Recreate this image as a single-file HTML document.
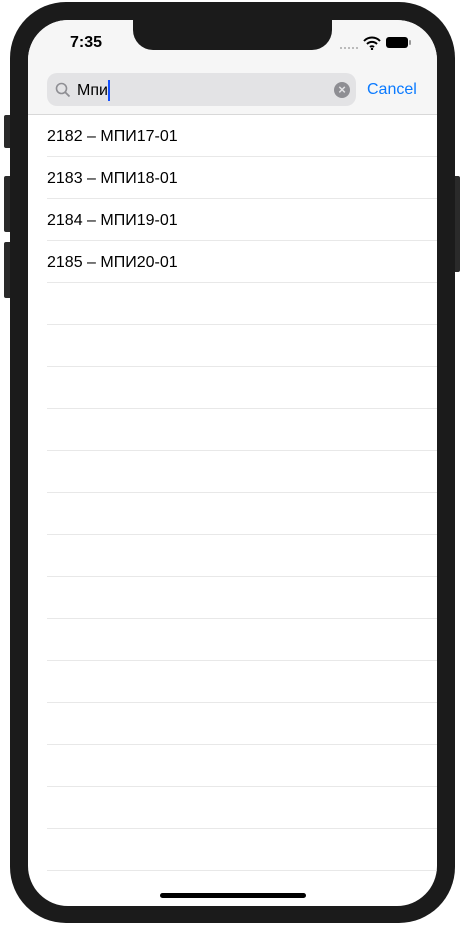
<!DOCTYPE html>
<html><head><meta charset="utf-8"><style>
body{margin:0;width:464px;height:925px;background:#fff;position:relative;overflow:hidden;font-family:"Liberation Sans",sans-serif}
.btn{position:absolute;background:#2a2a2a;border-radius:2px}
.frame{position:absolute;left:10px;top:2px;width:445px;height:921px;background:#1b1b1b;border-radius:56px}
.screen{position:absolute;left:28px;top:20px;width:409px;height:886px;background:#fff;border-radius:40px;overflow:hidden}
.hdr{position:absolute;left:0;top:0;width:409px;height:94px;background:#f6f6f6;border-bottom:1px solid #d8d8d8}
.notch{position:absolute;left:105px;top:0;width:199px;height:30px;background:#1b1b1b;border-radius:0 0 20px 20px}
.time{position:absolute;left:42px;top:14px;font-size:16px;font-weight:bold;color:#000}
.search{position:absolute;left:19px;top:53px;width:309px;height:33px;background:#e3e3e5;border-radius:10px}
.cancel{position:absolute;left:339px;top:61px;font-size:16px;color:#0a7aff}
.row{position:absolute;left:19px;width:390px;height:40px;padding-top:2px;border-bottom:1px solid #e8e8e8;font-size:16px;color:#000;line-height:42px}
.home{position:absolute;left:132px;top:873px;width:146px;height:5px;background:#000;border-radius:3px}
</style></head><body>
<div class="btn" style="left:4px;top:115px;width:8px;height:33px"></div>
<div class="btn" style="left:4px;top:176px;width:8px;height:56px"></div>
<div class="btn" style="left:4px;top:242px;width:8px;height:56px"></div>
<div class="btn" style="left:453px;top:176px;width:7px;height:96px"></div>
<div class="frame"></div>
<div class="screen">
<div class="hdr"></div>
<div class="notch"></div>
<div class="time">7:35</div>
<div style="position:absolute;left:312px;top:27px;width:18px;height:2px;border-top:2px dotted #bbb"></div>
<svg style="position:absolute;left:335px;top:16px" width="18" height="14" viewBox="0 0 18 14"><path d="M1 5a11 11 0 0 1 16 0M4 8a7 7 0 0 1 10 0M7 11a3 3 0 0 1 4 0" stroke="#000" stroke-width="2" fill="none"/><circle cx="9" cy="13" r="1.2"/></svg>
<div style="position:absolute;left:358px;top:17px;width:22px;height:11px;background:#000;border-radius:3px"></div>
<div style="position:absolute;left:381px;top:20px;width:2px;height:5px;background:#999;border-radius:1px"></div>
<div class="search">
<svg style="position:absolute;left:8px;top:9px" width="16" height="16" viewBox="0 0 16 16"><circle cx="6.5" cy="6.5" r="5" stroke="#8e8e93" stroke-width="1.6" fill="none"/><path d="M10 10l4.5 4.5" stroke="#8e8e93" stroke-width="1.8"/></svg>
<div style="position:absolute;left:30px;top:9px;font-size:16px;color:#000">Мпи</div>
<div style="position:absolute;left:61px;top:7px;width:2px;height:21px;background:#1450ff"></div>
<div style="position:absolute;left:287px;top:9px;width:16px;height:16px;border-radius:50%;background:#8e8e93;color:#e3e3e5;font-size:13px;line-height:16px;text-align:center;font-weight:bold">×</div>
</div>
<div class="cancel">Cancel</div>
<div class="row" style="top:94px">2182 – МПИ17-01</div>
<div class="row" style="top:136px">2183 – МПИ18-01</div>
<div class="row" style="top:178px">2184 – МПИ19-01</div>
<div class="row" style="top:220px">2185 – МПИ20-01</div>
<div class="row" style="top:262px"></div><div class="row" style="top:304px"></div>
<div class="row" style="top:346px"></div><div class="row" style="top:388px"></div>
<div class="row" style="top:430px"></div><div class="row" style="top:472px"></div>
<div class="row" style="top:514px"></div><div class="row" style="top:556px"></div>
<div class="row" style="top:598px"></div><div class="row" style="top:640px"></div>
<div class="row" style="top:682px"></div><div class="row" style="top:724px"></div>
<div class="row" style="top:766px"></div><div class="row" style="top:808px"></div>
<div class="home"></div>
</div>
</body></html>
